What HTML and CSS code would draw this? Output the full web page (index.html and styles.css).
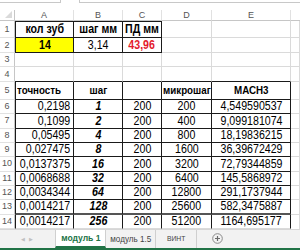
FILE: index.html
```html
<!DOCTYPE html>
<html>
<head>
<meta charset="utf-8">
<link rel="stylesheet" href="styles.css">
</head>
<body>
<div class="topbar">
  <div class="fbox fbox-name"></div>
  <div class="fbox fbox-mid"></div>
  <div class="fbox fbox-formula"></div>
</div>
<div class="sheet">
  <div class="corner"><span class="tri"></span></div>
  <div class="ch">A</div><div class="ch">B</div><div class="ch">C</div><div class="ch">D</div><div class="ch">E</div><div class="ch last"></div>

  <div class="rh">1</div>
  <div class="c h1 bl bt bb br"><span class="t">кол зуб</span></div>
  <div class="c h1 bt bb br"><span class="t">шаг мм</span></div>
  <div class="c h1 bt bb br"><span class="t">ПД мм</span></div>
  <div class="c"></div><div class="c"></div><div class="c"></div>

  <div class="rh">2</div>
  <div class="c v2 yellow bold bl bb br"><span class="t">14</span></div>
  <div class="c v2 bb br"><span class="t">3,14</span></div>
  <div class="c v2 red bold bb br"><span class="t">43,96</span></div>
  <div class="c"></div><div class="c"></div><div class="c"></div>

  <div class="rh">3</div>
  <div class="c"></div><div class="c"></div><div class="c"></div><div class="c"></div><div class="c"></div><div class="c"></div>

  <div class="rh">4</div>
  <div class="c bb"></div><div class="c bb"></div><div class="c bb"></div><div class="c bb"></div><div class="c bb"></div><div class="c"></div>

  <div class="rh">5</div>
  <div class="c h5 left bl bb br"><span class="t">точность</span></div>
  <div class="c h5 bb br"><span class="t">шаг</span></div>
  <div class="c h5 bb br"></div>
  <div class="c h5 left clip bb br"><span class="t">микрошаг</span></div>
  <div class="c h5 bb br"><span class="t">МАСН3</span></div>
  <div class="c"></div>

  <div class="rh">6</div>
  <div class="c num right bl bb br"><span class="t">0,2198</span></div><div class="c num bi bb br"><span class="t">1</span></div><div class="c num bb br"><span class="t">200</span></div><div class="c num bb br"><span class="t">200</span></div><div class="c num bb br"><span class="t">4,549590537</span></div><div class="c"></div>

  <div class="rh">7</div>
  <div class="c num right bl bb br"><span class="t">0,1099</span></div><div class="c num bi bb br"><span class="t">2</span></div><div class="c num bb br"><span class="t">200</span></div><div class="c num bb br"><span class="t">400</span></div><div class="c num bb br"><span class="t">9,099181074</span></div><div class="c"></div>

  <div class="rh">8</div>
  <div class="c num right bl bb br"><span class="t">0,05495</span></div><div class="c num bi bb br"><span class="t">4</span></div><div class="c num bb br"><span class="t">200</span></div><div class="c num bb br"><span class="t">800</span></div><div class="c num bb br"><span class="t">18,19836215</span></div><div class="c"></div>

  <div class="rh">9</div>
  <div class="c num right bl bb br"><span class="t">0,027475</span></div><div class="c num bi bb br"><span class="t">8</span></div><div class="c num bb br"><span class="t">200</span></div><div class="c num bb br"><span class="t">1600</span></div><div class="c num bb br"><span class="t">36,39672429</span></div><div class="c"></div>

  <div class="rh">10</div>
  <div class="c num right bl bb br"><span class="t">0,0137375</span></div><div class="c num bi bb br"><span class="t">16</span></div><div class="c num bb br"><span class="t">200</span></div><div class="c num bb br"><span class="t">3200</span></div><div class="c num bb br"><span class="t">72,79344859</span></div><div class="c"></div>

  <div class="rh">11</div>
  <div class="c num right bl bb br"><span class="t">0,0068688</span></div><div class="c num bi bb br"><span class="t">32</span></div><div class="c num bb br"><span class="t">200</span></div><div class="c num bb br"><span class="t">6400</span></div><div class="c num bb br"><span class="t">145,5868972</span></div><div class="c"></div>

  <div class="rh">12</div>
  <div class="c num right bl bb br"><span class="t">0,0034344</span></div><div class="c num bi bb br"><span class="t">64</span></div><div class="c num bb br"><span class="t">200</span></div><div class="c num bb br"><span class="t">12800</span></div><div class="c num bb br"><span class="t">291,1737944</span></div><div class="c"></div>

  <div class="rh">13</div>
  <div class="c num right bl bb2 br"><span class="t">0,0014217</span></div><div class="c num bi bb2 br"><span class="t">128</span></div><div class="c num bb2 br"><span class="t">200</span></div><div class="c num bb2 br"><span class="t">25600</span></div><div class="c num bb2 br"><span class="t">582,3475887</span></div><div class="c"></div>

  <div class="rh">14</div>
  <div class="c num right bl br"><span class="t">0,0014217</span></div><div class="c num bi br"><span class="t">256</span></div><div class="c num br"><span class="t">200</span></div><div class="c num br"><span class="t">51200</span></div><div class="c num br"><span class="t">1164,695177</span></div><div class="c nob"></div>
</div>
<div class="tabbar">
  <div class="nav"><span class="arr">&#9664;</span><span class="arr">&#9654;</span></div>
  <div class="tab active"><span class="t">модуль 1</span></div>
  <div class="tab t2"><span class="t">модуль 1.5</span></div>
  <div class="tab t3"><span class="t">ВИНТ</span></div>
  <div class="add">
    <svg width="11" height="11" viewBox="0 0 11 11"><circle cx="5.5" cy="5.5" r="4.8" fill="none" stroke="#8a8a8a" stroke-width="1"/><path d="M5.5 3v5M3 5.5h5" stroke="#6a6a6a" stroke-width="1.2"/></svg>
  </div>
</div>
<div class="status"></div>
</body>
</html>
```

FILE: styles.css
```css
* { box-sizing: border-box; }
html, body { margin: 0; padding: 0; background: #fff; }
body {
  width: 300px;
  height: 250px;
  overflow: hidden;
  font-family: "Liberation Sans", Arial, sans-serif;
  color: #000;
}
.topbar {
  height: 10px;
  display: flex;
}
.fbox {
  height: 3px;
  border-bottom: 1px solid #c8c8c8;
}
.fbox-name { width: 61px; border-right: 1px solid #c8c8c8; }
.fbox-mid { width: 18px; border-bottom: none; }
.fbox-formula { flex: 1; border-left: 1px solid #c8c8c8; }

.sheet {
  display: grid;
  grid-template-columns: 15px 59px 49px 39px 50px 79px 9px;
  grid-template-rows: 11px 17px 15px 14px 15px 18px repeat(9, 14.33px);
}
.corner {
  border-right: 1px solid #c6c6c6;
  border-bottom: 1px solid #c6c6c6;
  display: flex;
  align-items: flex-end;
  justify-content: flex-end;
  padding: 0 2px 2px 0;
}
.tri {
  width: 0; height: 0;
  border-left: 7px solid transparent;
  border-bottom: 7px solid #dadada;
}
.ch {
  border-right: 1px solid #e1e1e1;
  border-bottom: 1px solid #c6c6c6;
  font-size: 9px;
  color: #555;
  display: flex;
  align-items: center;
  justify-content: center;
  line-height: 1;
}
.ch.last { border-right: none; }
.rh {
  border-right: 1px solid #c6c6c6;
  border-bottom: 1px solid #e1e1e1;
  font-size: 9px;
  color: #555;
  display: flex;
  align-items: center;
  justify-content: center;
  line-height: 1;
}
.c {
  border-right: 1px solid #dadada;
  border-bottom: 1px solid #dadada;
  display: flex;
  align-items: center;
  justify-content: center;
  white-space: nowrap;
  overflow: hidden;
  line-height: 1;
  padding: 0 2px;
}
.t {
  display: inline-block;
  white-space: nowrap;
  transform: scaleX(0.85);
  transform-origin: center center;
}
.c.nob { border-bottom: none; }
.bl { border-left: 1px solid #1a1a1a; }
.bt { border-top: 1px solid #1a1a1a; }
.bb { border-bottom: 1px solid #1a1a1a; }
.bb2 { border-bottom: 2px solid #555; }
.br { border-right: 1px solid #1a1a1a; }

.h1 { font-weight: bold; font-size: 12.5px; }
.v2 { font-size: 12.5px; }
.h5 { font-weight: bold; font-size: 11.5px; }
.num { font-size: 12.5px; }
.bold { font-weight: bold; }
.bi { font-weight: bold; font-style: italic; }
.yellow { background: #ffff00; }
.red { color: #e31b2d; }
.left { justify-content: flex-start; padding-left: 1px; }
.left .t { transform-origin: left center; }
.right { justify-content: flex-end; padding-right: 3px; }
.right .t { transform-origin: right center; }
.clip { padding-left: 1px; justify-content: flex-start; }

.tabbar {
  height: 19px;
  background: #f2f2f2;
  border-top: 1px solid #d6d6d6;
  display: flex;
  align-items: stretch;
  font-size: 9px;
  color: #444;
}
.nav {
  width: 55px;
  display: flex;
  align-items: center;
  gap: 4px;
  padding-left: 21px;
  font-size: 5px;
  color: #c0c0c0;
}
.tab {
  display: flex;
  align-items: center;
  justify-content: center;
  border-right: 1px solid #cfcfcf;
  white-space: nowrap;
}
.tab .t { transform: scaleX(0.9); }
.tab.active {
  width: 51px;
  background: #fff;
  color: #217346;
  font-weight: bold;
  font-size: 9.5px;
  border-bottom: 2px solid #217346;
  border-left: 1px solid #d0d0d0;
}
.tab.t2 { width: 50px; }
.tab.t3 { width: 41px; font-size: 7.5px; }
.add {
  width: 40px;
  display: flex;
  align-items: center;
  justify-content: center;
}
.status {
  height: 2px;
  background: #217346;
}
```
